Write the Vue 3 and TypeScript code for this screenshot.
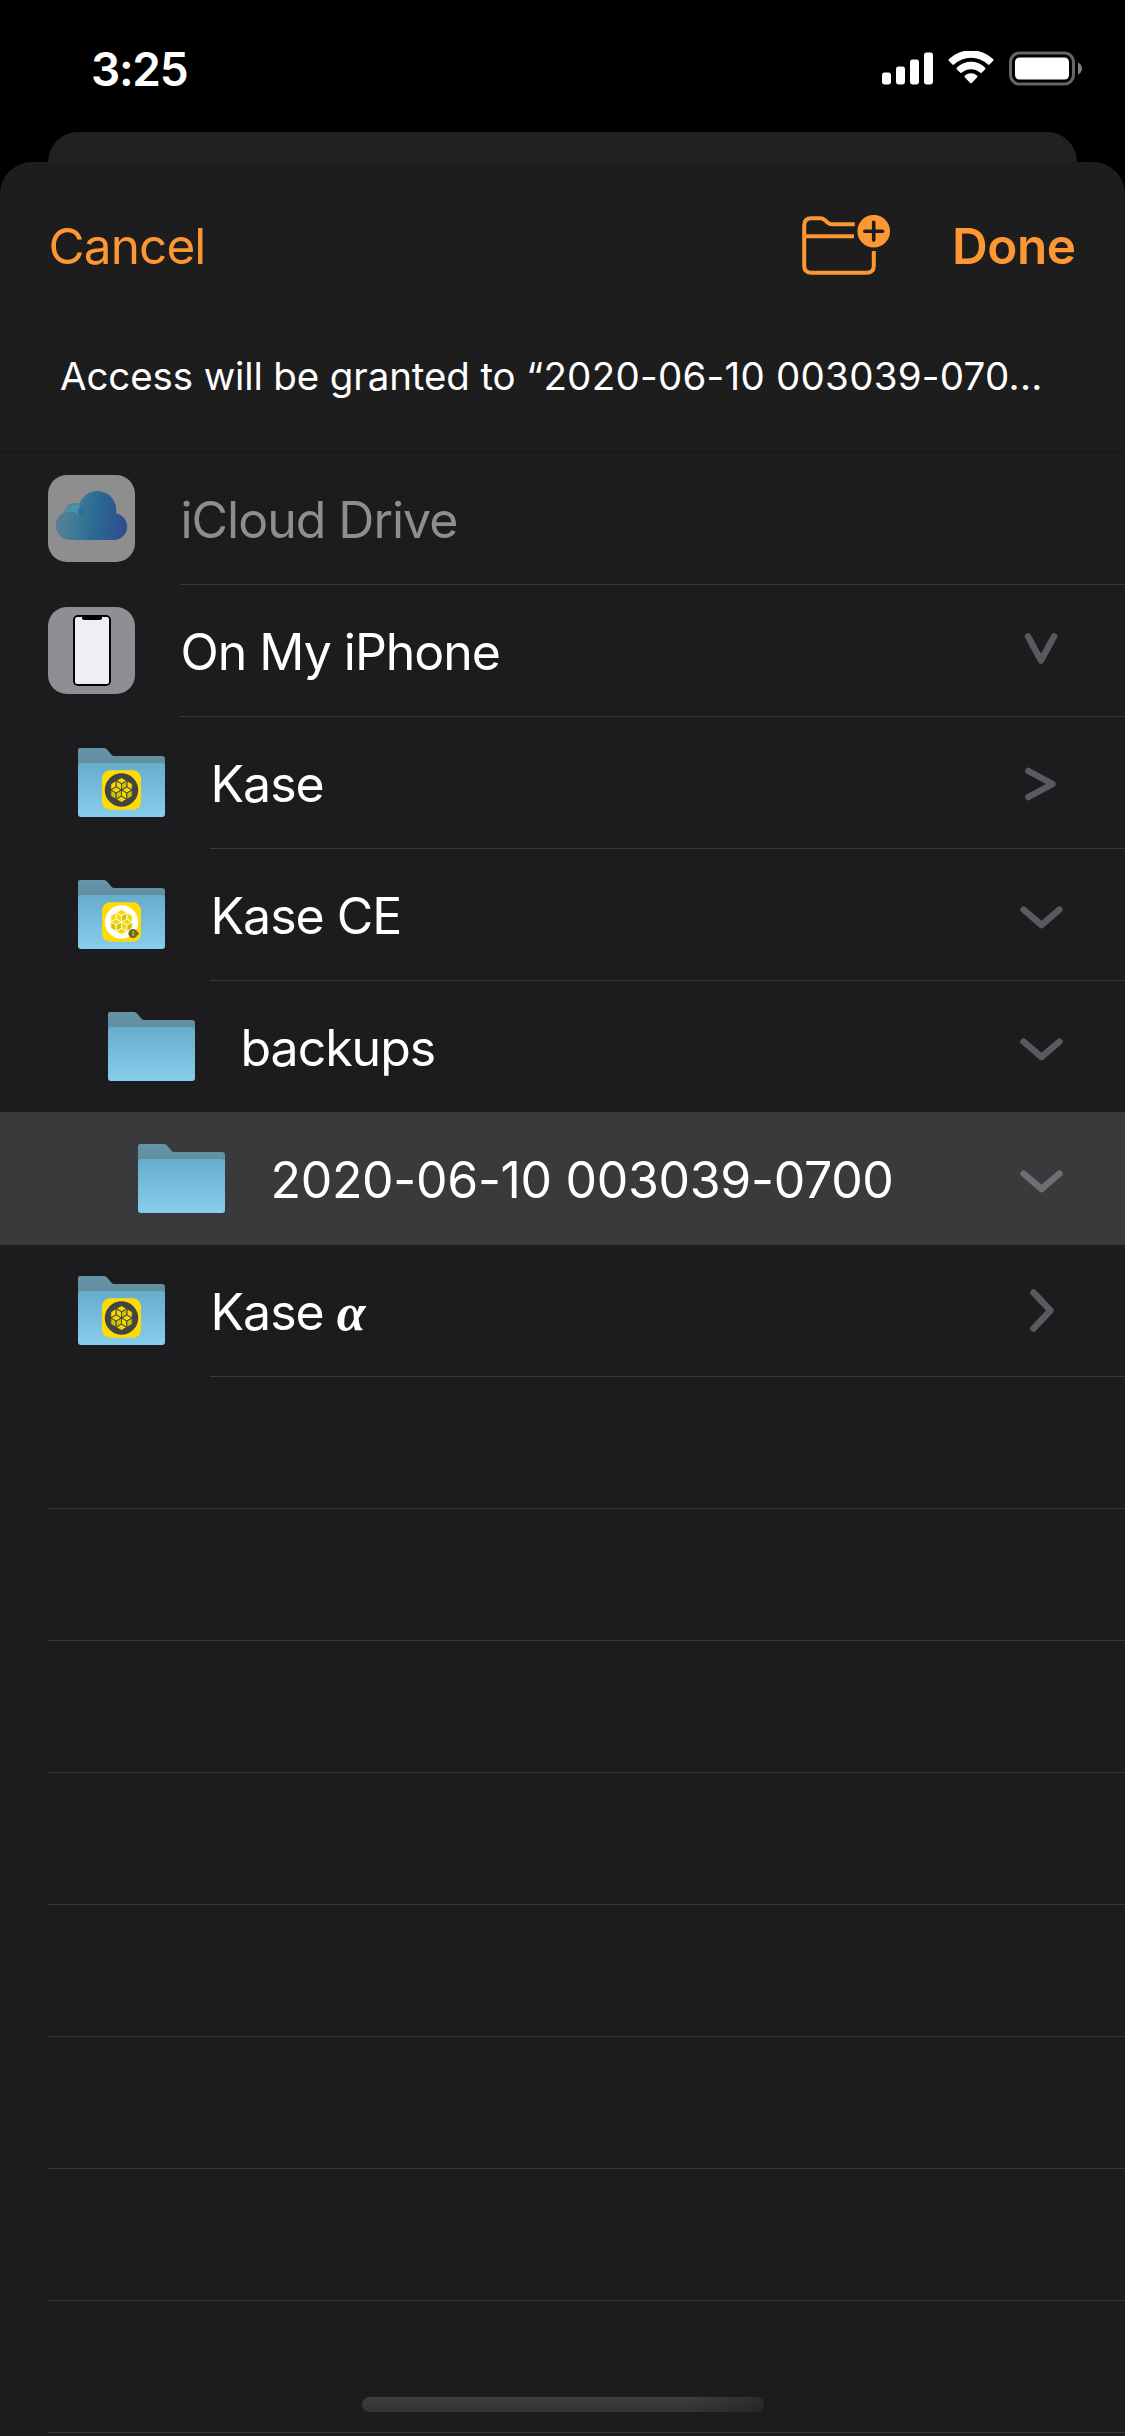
<script setup lang="ts">
type Icon = 'cloud' | 'phone' | 'folder'
interface Row {
  label: string
  suffix?: string
  icon: Icon
  level: number
  badge?: 'dark' | 'light'
  chevron?: string
  disabled?: boolean
  selected?: boolean
  numeric?: boolean
}

const wideDown = 'M1023.6 60.6 L1041.5 76 L1059.4 60.6'

const rows: Row[] = [
  { label: 'iCloud Drive', icon: 'cloud', level: 0, disabled: true },
  { label: 'On My iPhone', icon: 'phone', level: 0, chevron: 'M1028 51.5 L1041 75.5 L1054 51.5' },
  { label: 'Kase', icon: 'folder', level: 1, badge: 'dark', chevron: 'M1028.5 54 L1052.5 67 L1028.5 80' },
  { label: 'Kase CE', icon: 'folder', level: 1, badge: 'light', chevron: wideDown },
  { label: 'backups', icon: 'folder', level: 2, chevron: wideDown },
  { label: '2020-06-10 003039-0700', icon: 'folder', level: 3, chevron: wideDown, selected: true, numeric: true },
  { label: 'Kase ', suffix: 'α', icon: 'folder', level: 1, badge: 'dark', chevron: 'M1033.5 47.5 L1050.5 65.5 L1033.5 83.5' },
]

// A pointy-top hexagon tiled with twelve rhombi: six around the centre, six on the rim.
const side = 6.2
const at = (radius: number, degrees: number): string => {
  const a = (degrees * Math.PI) / 180
  return `${(radius * Math.cos(a)).toFixed(2)},${(-radius * Math.sin(a)).toFixed(2)}`
}
const long = side * Math.sqrt(3)
const tiles = [0, 1, 2, 3, 4, 5].flatMap((i) => {
  const inner = i * 60
  const outer = inner + 30
  return [
    { points: [at(0, 0), at(side, inner - 30), at(long, inner), at(side, inner + 30)].join(' '), shade: i % 3 === 1 },
    { points: [at(side, outer), at(long, outer - 30), at(side * 2, outer), at(long, outer + 30)].join(' '), shade: i === 3 || i === 5 },
  ]
})
</script>

<template>
  <div class="screen">
    <header class="status">
      <span class="time">3:25</span>
      <svg class="indicators" width="202" height="36" viewBox="0 0 202 36">
        <g fill="#fff">
          <rect x="0" y="21.5" width="9" height="12" rx="2.4" />
          <rect x="14" y="15.5" width="9" height="18" rx="2.4" />
          <rect x="28" y="8.500" width="9" height="25" rx="2.4" />
          <rect x="42" y="1.500" width="9" height="32" rx="2.4" />
          <path d="M67 10 Q66 9 67 8 A32 32 0 0 1 111 8 Q112 9 111 10 L107.500 13.500 Q106.700 14.200 105.800 13.400 A24.500 24.500 0 0 0 72.200 13.400 Q71.300 14.200 70.500 13.500 Z" />
          <path d="M74.800 18.200 Q74 17.300 75 16.400 A20.500 20.500 0 0 1 103 16.400 Q104 17.300 103.200 18.200 L99.700 21.700 Q98.900 22.300 98 21.600 A13.500 13.500 0 0 0 80 21.600 Q79.100 22.300 78.300 21.700 Z" />
          <path d="M82.800 26.200 Q82 25.300 83 24.500 A9.500 9.500 0 0 1 95 24.500 Q96 25.300 95.200 26.200 L89.800 31.900 Q89 32.700 88.200 31.900 Z" />
          <rect x="133" y="6.500" width="54" height="22" rx="4.500" />
        </g>
        <rect x="128.500" y="2" width="63" height="31" rx="9" fill="none" stroke="#666" stroke-width="3" />
        <path d="M196 11.500 Q200 13.500 200 17.500 Q200 21.500 196 23.500 Z" fill="#808080" />
      </svg>
    </header>
    <div class="backcard"></div>
    <main class="sheet">
      <nav class="bar">
        <span class="cancel">Cancel</span>
        <svg class="newfolder" width="90" height="62" viewBox="0 0 90 62">
          <g fill="none" stroke="#fd9733" stroke-width="4">
            <path d="M52.800 9.200 H30 Q27.500 9.200 25.500 7.500 L22.800 5 Q20.800 3.200 18 3.200 H9.500 Q2.200 3.200 2.200 10.500 V50.500 Q2.200 57.800 9.500 57.800 H64.500 Q71.800 57.800 71.800 50.500 V36" />
            <path d="M2.200 21.200 H52" />
          </g>
          <circle cx="71.700" cy="16.200" r="16.300" fill="#fd9733" />
          <path d="M71.700 7.300 V25.100 M62.800 16.200 H80.600" stroke="#1d1d1d" stroke-width="3.600" stroke-linecap="round" />
        </svg>
        <span class="done">Done</span>
      </nav>
      <p class="notice">Access will be granted to <span class="target">“2020-06-10 003039-070...</span></p>
      <section class="list">
        <div
          v-for="row in rows"
          :key="row.label"
          class="row"
          :class="['level' + row.level, { disabled: row.disabled, selected: row.selected }]"
        >
          <svg v-if="row.icon === 'cloud'" class="icon" width="87" height="87" viewBox="0 0 87 87">
            <defs>
              <linearGradient id="cloud" gradientUnits="userSpaceOnUse" x1="8" y1="45" x2="79" y2="55">
                <stop offset="0" stop-color="#5b8093" />
                <stop offset=".28" stop-color="#3d7c95" />
                <stop offset=".5" stop-color="#2c6d93" />
                <stop offset=".78" stop-color="#2c5a90" />
                <stop offset="1" stop-color="#304a8d" />
              </linearGradient>
            </defs>
            <rect width="87" height="87" rx="19" fill="#8e8e8e" />
            <g fill="url(#cloud)">
              <circle cx="27" cy="38.500" r="10.500" />
              <path d="M22 65 A14.500 14.500 0 0 1 22.500 36 Q27 36 30.500 38 A19 19 0 1 1 68 38.200 A13.500 13.500 0 0 1 66 65 Z" />
            </g>
            <path d="M17 38 A10.500 10.500 0 0 1 33 30.500 Q30 35 30 39 Q24 35 17 38 Z" fill="#4b90a9" />
            <path d="M30 39 Q29.500 34 33 30.500 Q37 33 37.500 40 Q34 43 30 39 Z" fill="#24709a" opacity=".7" />
          </svg>
          <svg v-else-if="row.icon === 'phone'" class="icon" width="87" height="87" viewBox="0 0 87 87">
            <rect width="87" height="87" rx="19" fill="#8e8e93" />
            <rect x="25" y="8" width="38" height="71" rx="5" fill="#000" />
            <path d="M29.500 10 H34 V11 Q34 13 36 13 H52 Q54 13 54 11 V10 H58.500 Q61 10 61 12.500 V74.500 Q61 77 58.500 77 H29.500 Q27 77 27 74.500 V12.500 Q27 10 29.500 10 Z" fill="#efeef3" />
          </svg>
          <svg v-else class="icon" width="87" height="69" viewBox="0 0 87 69">
            <defs>
              <linearGradient id="front" x1="0" y1="0" x2="0" y2="1">
                <stop offset="0" stop-color="#67acca" />
                <stop offset="1" stop-color="#87cdec" />
              </linearGradient>
              <linearGradient id="back" x1="0" y1="0" x2="0" y2="1">
                <stop offset="0" stop-color="#6594a8" />
                <stop offset="1" stop-color="#5f8a9c" />
              </linearGradient>
            </defs>
            <path d="M0 22 V2 Q0 0 2 0 H26 Q28 0 29.500 2 L33.500 6.800 Q34.500 8 36.500 8 H84 Q87 8 87 11 V22 Z" fill="url(#back)" />
            <rect y="15" width="87" height="54" rx="3" fill="url(#front)" />
            <g v-if="row.badge" transform="translate(43.5 42)">
              <rect x="-19.500" y="-19.700" width="39" height="39.400" rx="8" fill="#ffdb05" />
              <circle r="16.700" :fill="row.badge === 'dark' ? '#434343' : '#fff'" />
              <polygon
                v-for="(tile, i) in tiles"
                :key="i"
                :points="tile.points"
                :fill="tile.shade ? '#cfc400' : '#f3d90b'"
                :stroke="row.badge === 'dark' ? '#4b4938' : '#fdf9d8'"
                stroke-width="1"
                stroke-linejoin="round"
              />
              <g v-if="row.badge === 'light'">
                <circle cx="11.500" cy="11.500" r="4.600" fill="#6d6430" />
                <path d="M15 9.500 L18 11.500 L15 13.500 Z" fill="#6d6430" />
                <path d="M11.800 9 V14" stroke="#b5a43a" stroke-width="2" />
              </g>
            </g>
          </svg>
          <div class="content">
            <span class="label" :class="{ numeric: row.numeric }">{{ row.label }}<i v-if="row.suffix" class="alpha">{{ row.suffix }}</i></span>
            <svg v-if="row.chevron" class="chevron" width="60" height="132" viewBox="1012 0 60 132">
              <path :d="row.chevron" />
            </svg>
          </div>
        </div>
        <div v-for="n in 8" :key="n" class="row empty"><div class="content"></div></div>
      </section>
    </main>
    <div class="home"></div>
  </div>
</template>

<style>
body {
  margin: 0;
  background: #000;
}
</style>

<style scoped>
.screen {
  position: relative;
  display: flex;
  flex-direction: column;
  width: 1125px;
  height: 2436px;
  overflow: hidden;
  background: #000;
  color: #fff;
  font-family: Inter, 'Liberation Sans', sans-serif;
}
.status {
  box-sizing: border-box;
  display: flex;
  justify-content: space-between;
  height: 132px;
  padding: 51px 41px 0 91px;
}
.time {
  margin-top: -1px;
  font-size: 46px;
  line-height: 38px;
  font-weight: 600;
  letter-spacing: -1.3px;
}
.indicators {
  display: block;
}
.backcard {
  height: 30px;
  margin: 0 48px;
  border-radius: 30px 30px 0 0;
  background: #202122;
}
.sheet {
  flex: 1;
  display: flex;
  flex-direction: column;
  min-height: 0;
  border-radius: 32px 32px 0 0;
  background: #1d1d1d;
}
.bar {
  display: flex;
  align-items: flex-start;
  height: 168px;
  padding: 0 47px 0 48px;
  color: #fd9733;
  font-size: 49.5px;
  line-height: 60px;
}
.cancel {
  margin-top: 54px;
  padding-left: 0.5px;
  letter-spacing: -0.9px;
}
.newfolder {
  margin: 53px 0 0 auto;
}
.done {
  width: 126px;
  margin: 54px 0 0 60px;
  font-weight: 600;
  letter-spacing: -0.5px;
}
.notice {
  box-sizing: border-box;
  height: 123px;
  margin: 0;
  padding: 21px 60px 0;
  border-bottom: 1px solid #151515;
  font-size: 38.5px;
  line-height: 50px;
  white-space: nowrap;
  letter-spacing: -0.12px;
}
.target {
  letter-spacing: 0.25px;
}
.list {
  flex: 1;
  background: #1c1c1e;
}
.row {
  display: flex;
  align-items: center;
  height: 132px;
  padding-left: 48px;
}
.level1 {
  padding-left: 78px;
}
.level2 {
  padding-left: 108px;
}
.level3 {
  padding-left: 138px;
}
.icon {
  flex: none;
  margin: 0 45px 1px 0;
}
.content {
  box-sizing: border-box;
  flex: 1;
  display: flex;
  justify-content: space-between;
  height: 132px;
  padding-right: 53px;
  border-bottom: 1px solid #3a3a3d;
}
.label {
  padding: 37px 0 0 0.5px;
  font-size: 50px;
  line-height: 60px;
  white-space: pre;
  letter-spacing: -1.02px;
}
.numeric {
  letter-spacing: -0.32px;
}
.disabled .label {
  color: #8e8e8e;
}
.selected {
  box-shadow: 0 -1px #3a3a3c;
  background: #3a3a3c;
}
.chevron {
  flex: none;
  fill: none;
  stroke: #5a5a5e;
  stroke-width: 6.5;
  stroke-linecap: round;
  stroke-linejoin: round;
}
.selected .chevron {
  stroke: #6f6f73;
}
.alpha {
  font-family: 'Liberation Serif', serif;
  font-size: 52px;
  font-weight: 700;
  font-style: italic;
  line-height: 1;
}
.home {
  position: absolute;
  left: 362px;
  bottom: 24px;
  width: 402px;
  height: 15px;
  border-radius: 8px;
  background: linear-gradient(90deg, transparent 82%, rgba(28, 28, 28, 0.5)), linear-gradient(#3d3d3d, #323232);
}
</style>
